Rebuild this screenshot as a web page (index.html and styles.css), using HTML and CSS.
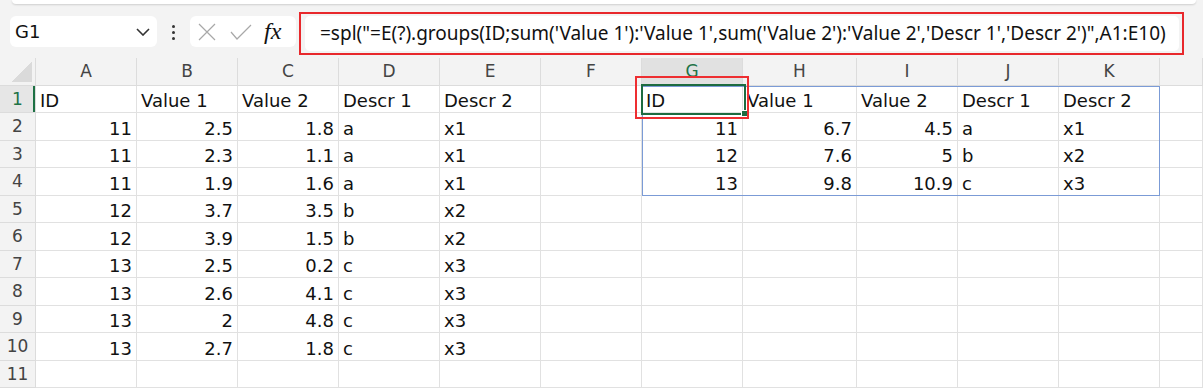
FILE: index.html
```html
<!DOCTYPE html>
<html lang="en">
<head>
  <meta charset="UTF-8">
  <title>Sheet</title>
  <link rel="stylesheet" href="styles.css">
</head>
<body>
  <!-- formula bar -->
  <div class="toolbar">
    <div class="ribbon-edge"></div>
    <div class="formula-row">
      <div class="name-box">
        <span>G1</span>
        <svg class="chevron" width="14" height="8" viewBox="0 0 14 8"><path d="M1 1l6 6 6-6" fill="none" stroke="#333" stroke-width="1.6"/></svg>
      </div>
      <div class="dots"><i></i><i></i><i></i></div>
      <div class="fx-box">
        <svg width="18" height="18" viewBox="0 0 18 18"><path d="M1 1l16 16M17 1L1 17" stroke="#a8a8a8" stroke-width="1.2" fill="none"/></svg>
        <svg width="22" height="16" viewBox="0 0 22 16"><path d="M1 8l6 7L21 1" stroke="#a8a8a8" stroke-width="1.2" fill="none"/></svg>
        <span class="fx">fx</span>
      </div>
      <div class="formula-mark">
        <div class="formula-input">=spl("=E(?).groups(ID;sum('Value 1'):'Value 1',sum('Value 2'):'Value 2','Descr 1','Descr 2')",A1:E10)</div>
      </div>
    </div>
  </div>

  <!-- grid -->
  <div class="sheet" id="sheet"></div>

  <script>
    const letters = ['A', 'B', 'C', 'D', 'E', 'F', 'G', 'H', 'I', 'J', 'K', ''];
    const rows = [
      ['ID', 'Value 1', 'Value 2', 'Descr 1', 'Descr 2', '', 'ID', 'Value 1', 'Value 2', 'Descr 1', 'Descr 2'],
      [11, 2.5, 1.8, 'a', 'x1', '', 11, 6.7, 4.5, 'a', 'x1'],
      [11, 2.3, 1.1, 'a', 'x1', '', 12, 7.6, 5, 'b', 'x2'],
      [11, 1.9, 1.6, 'a', 'x1', '', 13, 9.8, 10.9, 'c', 'x3'],
      [12, 3.7, 3.5, 'b', 'x2'],
      [12, 3.9, 1.5, 'b', 'x2'],
      [13, 2.5, 0.2, 'c', 'x3'],
      [13, 2.6, 4.1, 'c', 'x3'],
      [13, 2, 4.8, 'c', 'x3'],
      [13, 2.7, 1.8, 'c', 'x3'],
      []
    ];

    const sheet = document.getElementById('sheet');

    function add(cls, text) {
      const div = document.createElement('div');
      div.className = cls;
      div.textContent = text;
      sheet.appendChild(div);
      return div;
    }

    // column headers
    add('corner', '');
    letters.forEach(l => add(l === 'G' ? 'head active' : 'head', l));

    // rows
    rows.forEach((row, r) => {
      add(r === 0 ? 'row-head active' : 'row-head', r + 1);
      for (let c = 0; c < letters.length; c++) {
        const v = row[c] === undefined ? '' : row[c];
        add(typeof v === 'number' ? 'cell num' : 'cell', v);
      }
    });

    // overlays: result table, selected cell, red mark
    add('table-outline', '');
    add('selection', '');
    add('note-mark', '');
  </script>
</body>
</html>
```

FILE: styles.css
```css
body {
  margin: 0;
  font-family: "DejaVu Sans", sans-serif;
  background-color: #fff;
  color: #111;
  overflow: hidden;
}

.toolbar {
  height: 58px;
  background-color: #f3f3f3;
}

.ribbon-edge {
  height: 4px;
  margin: 0 7px 0 12px;
  background-color: #fff;
  border-radius: 0 0 7px 7px;
  box-shadow: 0 1px 2px rgba(0, 0, 0, 0.15);
}

.formula-row {
  display: flex;
  align-items: flex-start;
  margin-top: 8px;
  padding-left: 10px;
}

.name-box {
  display: flex;
  align-items: center;
  justify-content: space-between;
  box-sizing: border-box;
  width: 147px;
  height: 31px;
  margin-top: 4px;
  padding: 0 7px 0 5px;
  background-color: #fff;
  border-radius: 6px;
  font-size: 18px;
}

.dots {
  display: flex;
  flex-direction: column;
  gap: 3px;
  margin: 13px 15px 0 15px;
}

.dots i {
  width: 3px;
  height: 3px;
  background-color: #333;
  border-radius: 50%;
}

.fx-box {
  display: flex;
  align-items: center;
  gap: 14px;
  box-sizing: border-box;
  width: 106px;
  height: 31px;
  margin-top: 4px;
  padding-left: 8px;
  background-color: #fff;
  border-radius: 6px;
}

.fx {
  font-family: "Liberation Serif", serif;
  font-style: italic;
  font-size: 24px;
  margin-left: -2px;
}

.formula-mark {
  box-sizing: border-box;
  width: 885px;
  height: 43px;
  margin-left: 3px;
  padding: 2px 3px 2px 4px;
  border: 2px solid #e8282c;
}

.formula-input {
  height: 100%;
  padding-left: 15px;
  background-color: #fff;
  border-radius: 5px;
  font-family: "Noto Sans", sans-serif;
  font-size: 19px;
  line-height: 35px;
  white-space: nowrap;
}

.sheet {
  position: relative;
  display: grid;
  grid-template-columns: 36px repeat(7, 101px) 114px repeat(3, 101px) 1fr;
  grid-auto-rows: 27.5px;
}

.corner,
.head,
.row-head {
  box-sizing: border-box;
  display: flex;
  align-items: center;
  justify-content: center;
  background-color: #f3f3f3;
  border-right: 1px solid #dcdcdc;
  border-bottom: 1px solid #dcdcdc;
  color: #444;
  font-size: 17px;
}

.corner {
  background-image: linear-gradient(to top left, #dadada 50%, transparent 50%);
  background-size: 21px 20px;
  background-position: right 3px bottom 3px;
  background-repeat: no-repeat;
}

.head.active {
  background-color: #e1e1e1;
  color: #217346;
}

.row-head.active {
  background-color: #e6e6e6;
  color: #217346;
  box-shadow: inset -2px 0 #1e7145;
}

.cell {
  box-sizing: border-box;
  display: flex;
  align-items: center;
  padding: 4px 4px 0 4px;
  border-right: 1px solid #e1e1e1;
  border-bottom: 1px solid #e1e1e1;
  font-size: 18px;
  white-space: nowrap;
  overflow: hidden;
}

.cell.num {
  justify-content: flex-end;
}

.table-outline {
  position: absolute;
  inset: 0;
  grid-column: 8 / 13;
  grid-row: 2 / 6;
  border: 1px solid #7b9bd6;
}

.selection {
  position: absolute;
  top: -1.5px;
  left: -1px;
  right: -3px;
  bottom: -2px;
  grid-column: 8 / 9;
  grid-row: 2 / 3;
  border: 2px solid #1d6b40;
}

.selection::after {
  content: "";
  position: absolute;
  right: -4px;
  bottom: -4px;
  width: 5px;
  height: 5px;
  background-color: #1d6b40;
  border: 1px solid #fff;
}

.note-mark {
  position: absolute;
  top: -9.5px;
  left: -7px;
  right: -6px;
  bottom: -6px;
  grid-column: 8 / 9;
  grid-row: 2 / 3;
  border: 2px solid #ee2e31;
}
```
